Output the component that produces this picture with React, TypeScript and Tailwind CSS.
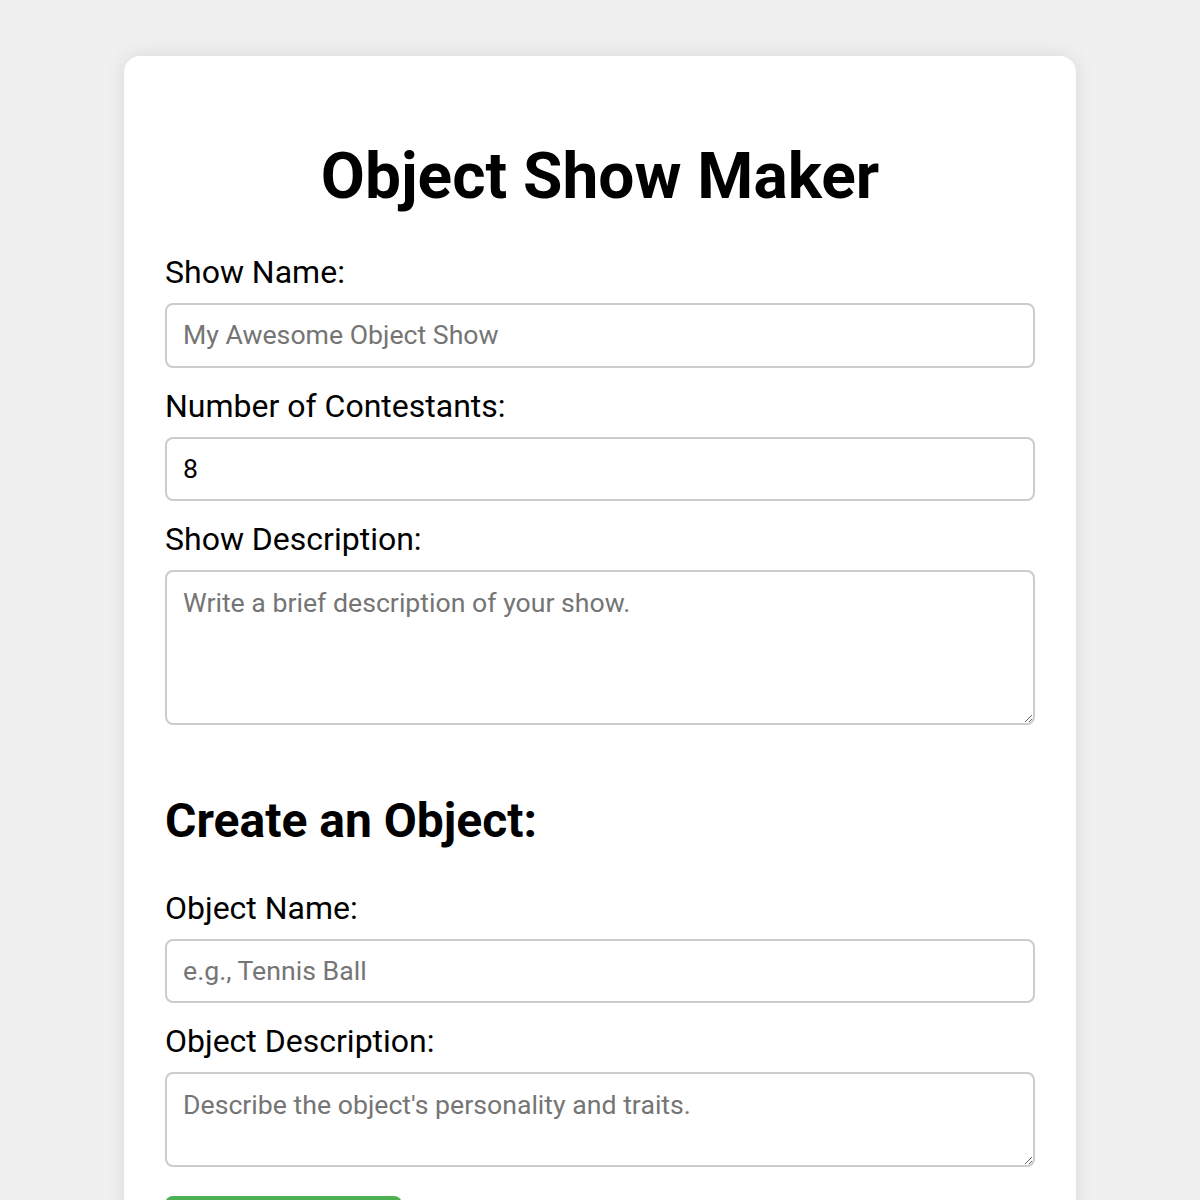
import React, { useState } from 'react'

export default function App(): React.JSX.Element {
  const [count, setCount] = useState('8')

  const label = 'block text-[32px] leading-[37.5px] text-black mb-[11.5px]'
  const input =
    'block w-full h-[64.5px] rounded-[8px] border-2 border-[#cccccc] px-[16px] text-[26.67px] text-black placeholder-[#757575] outline-none mb-[20px]'
  const area =
    'block w-full rounded-[8px] border-2 border-[#cccccc] px-[16px] pt-[16px] pb-[12px] text-[26.67px] leading-[31px] text-black placeholder-[#757575] outline-none'

  return (
    <div className="min-h-[1200px] bg-[#f0f0f0] pt-[56px]" style={{ fontFamily: 'Roboto, "Noto Sans", sans-serif' }}>
      <div className="mx-auto w-[952px] rounded-[16px] bg-white px-[41px] pt-[83px] pb-[60px] shadow-[0_0_20px_rgba(0,0,0,0.1)]">
        <h1 className="mb-[40px] text-center text-[64px] leading-[75px] font-bold text-black">Object Show Maker</h1>

        {/* Show */}
        <label className={label}>Show Name:</label>
        <input type="text" placeholder="My Awesome Object Show" className={input} />

        <label className={label}>Number of Contestants:</label>
        <input type="number" value={count} onChange={(e) => setCount(e.target.value)} className={input} />

        <label className={label}>Show Description:</label>
        <textarea placeholder="Write a brief description of your show." className={`${area} h-[154.5px]`} />

        {/* Object */}
        <h2 className="mt-[68px] mb-[41px] text-[48px] leading-[56px] font-bold text-black">Create an Object:</h2>

        <label className={label}>Object Name:</label>
        <input type="text" placeholder="e.g., Tennis Ball" className={input} />

        <label className={label}>Object Description:</label>
        <textarea placeholder="Describe the object's personality and traits." className={`${area} h-[94.5px]`} />

        <button className="mt-[29px] h-[60px] w-[237px] rounded-[8px] bg-[#4caf50] text-[26.67px] text-white">
          Add Object
        </button>
      </div>
    </div>
  )
}
